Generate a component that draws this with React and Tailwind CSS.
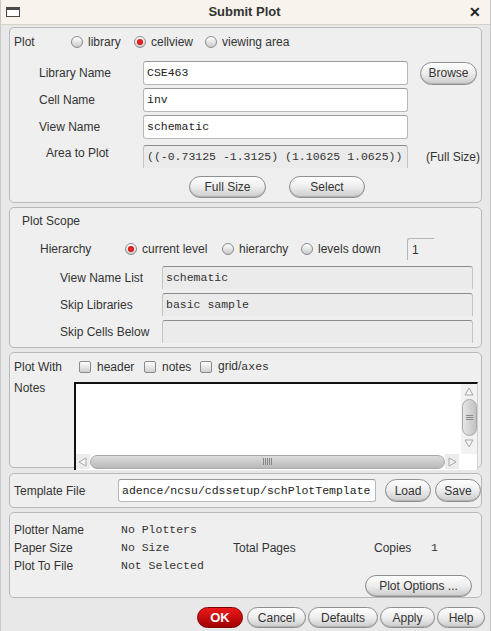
import React from 'react';

const sans = "font-['Liberation_Sans',Arial,sans-serif]";
const mono = "font-['Liberation_Mono','Courier_New',monospace]";

const Btn = ({children, className = ''}) => (
    <div className={`flex items-center justify-center rounded-full border border-[#8f8f8f] bg-linear-to-b from-[#fefefe] via-[#ededed] to-[#cbcbcb] text-[12px] text-[#333] shadow-[inset_0_-1px_0_#b3b3b3] ${className}`}>
        {children}
    </div>
);

const Radio = ({on}) => (
    <span className="flex h-[12px] w-[12px] shrink-0 items-center justify-center rounded-full border border-[#8a8a8a] bg-linear-to-b from-white to-[#cacaca]">
        {on && <span className="h-[6px] w-[6px] rounded-full bg-[radial-gradient(circle,#ff3030,#b00000)]" />}
    </span>
);

const Check = () => (
    <span className="h-[12px] w-[12px] shrink-0 rounded-[2px] border border-[#8a8a8a] bg-linear-to-b from-white to-[#cfcfcf]" />
);

const Field = ({children, className = ''}) => (
    <div className={`flex items-center rounded-[3px] border border-[#b8b8b8] border-t-[#9a9a9a] bg-white pl-[3px] text-[11.5px] text-[#222] ${mono} ${className}`}>
        {children}
    </div>
);

const Inactive = ({children, className = ''}) => (
    <div className={`flex items-center rounded-t-[3px] border-x border-t border-[#c4c4c4] border-t-[#8c8c8c] bg-[#ebebeb] pl-[3px] text-[11.5px] text-[#333] ${mono} ${className}`}>
        {children}
    </div>
);

const Panel = ({children, className = ''}) => (
    <div className={`mx-[8px] rounded-[5px] border border-[#b9b9b9] bg-[#efefef] ${className}`}>{children}</div>
);

const Arrow = ({dir}) => {
    const pts = {
        up: '3,10 7,3 11,10',
        down: '3,4 7,11 11,4',
        left: '10,3 3,7 10,11',
        right: '4,3 11,7 4,11',
    }[dir];
    return (
        <svg width="14" height="14" viewBox="0 0 14 14">
            <polygon points={pts} fill="#f4f4f4" stroke="#a8a8a8" strokeWidth="1" />
        </svg>
    );
};

const App = () => (
    <div className={`flex h-[631px] w-[491px] flex-col overflow-hidden border-x border-[#c9c9c9] bg-[#e8e8e8] ${sans} text-[12px] text-[#333]`}>
        <div className="flex h-[25px] shrink-0 items-center border-b border-[#d6d1c9] bg-[#f8f4ed] px-[5px]">
            <span className="h-[10px] w-[14px] border border-t-[3px] border-[#4a4a4a] bg-white" />
            <span className="flex-1 text-center text-[13px] font-bold text-[#333]">Submit Plot</span>
            <span className="mr-[4px] text-[14px] font-bold text-[#222]">✕</span>
        </div>

        <Panel className="mt-[2px] h-[176px] shrink-0">
            <div className="flex h-[28px] items-center">
                <span className="ml-[4px] w-[57px]">Plot</span>
                <div className="flex w-[63px] items-center gap-[5px]"><Radio />library</div>
                <div className="flex w-[71px] items-center gap-[5px]"><Radio on />cellview</div>
                <div className="flex items-center gap-[5px]"><Radio />viewing area</div>
            </div>
            <div className="mt-[5px] flex h-[24px] items-center">
                <span className="ml-[29px] w-[104px]">Library Name</span>
                <Field className="h-[24px] w-[265px]">CSE463</Field>
                <Btn className="ml-[12px] h-[23px] w-[57px]">Browse</Btn>
            </div>
            <div className="mt-[3px] flex h-[24px] items-center">
                <span className="ml-[29px] w-[104px]">Cell Name</span>
                <Field className="h-[24px] w-[265px]">inv</Field>
            </div>
            <div className="mt-[3px] flex h-[24px] items-center">
                <span className="ml-[29px] w-[104px]">View Name</span>
                <Field className="h-[24px] w-[265px]">schematic</Field>
            </div>
            <div className="mt-[6px] flex h-[23px] items-start">
                <span className="ml-[36px] w-[97px] leading-[16px]">Area to Plot</span>
                <Inactive className="h-[23px] w-[265px]">((-0.73125 -1.3125) (1.10625 1.0625))</Inactive>
                <span className="ml-[18px] self-center">(Full Size)</span>
            </div>
            <div className="mt-[8px] flex h-[22px]">
                <Btn className="ml-[179px] h-[22px] w-[77px]">Full Size</Btn>
                <Btn className="ml-[23px] h-[22px] w-[76px]">Select</Btn>
            </div>
        </Panel>

        <Panel className="mt-[4px] h-[141px] shrink-0">
            <div className="flex h-[26px] items-center pl-[12px]">Plot Scope</div>
            <div className="mt-[3px] flex h-[24px] items-center">
                <span className="ml-[30px] w-[85px]">Hierarchy</span>
                <div className="flex w-[97px] items-center gap-[5px]"><Radio on />current level</div>
                <div className="flex w-[79px] items-center gap-[5px]"><Radio />hierarchy</div>
                <div className="flex w-[106px] items-center gap-[5px]"><Radio />levels down</div>
                <div className="flex h-[22px] w-[27px] items-center rounded-tl-[3px] border-l border-t border-[#b5b5b5] pl-[4px]">1</div>
            </div>
            <div className="mt-[5px] flex h-[23px] items-center">
                <span className="ml-[50px] w-[102px]">View Name List</span>
                <Inactive className="h-[23px] w-[311px]">schematic</Inactive>
            </div>
            <div className="mt-[4px] flex h-[23px] items-center">
                <span className="ml-[50px] w-[102px]">Skip Libraries</span>
                <Inactive className="h-[23px] w-[311px]">basic sample</Inactive>
            </div>
            <div className="mt-[4px] flex h-[23px] items-center">
                <span className="ml-[50px] w-[102px]">Skip Cells Below</span>
                <Inactive className="h-[23px] w-[311px]" />
            </div>
        </Panel>

        <Panel className="mt-[4px] h-[116px] shrink-0">
            <div className="flex h-[27px] items-center">
                <span className="ml-[4px] w-[65px]">Plot With</span>
                <div className="flex w-[65px] items-center gap-[6px]"><Check />header</div>
                <div className="flex w-[56px] items-center gap-[6px]"><Check />notes</div>
                <div className="flex items-center gap-[6px]"><Check /><span>grid/<span className={`text-[11.5px] ${mono}`}>axes</span></span></div>
            </div>
            <div className="mt-[2px] flex items-start">
                <span className="ml-[4px] w-[60px] leading-[12px]">Notes</span>
                <div className="flex h-[88px] w-[404px] flex-col border-l-2 border-r border-t-2 border-[#111] border-r-[#d0d0d0] bg-white">
                    <div className="flex h-[70px]">
                        <div className="flex-1" />
                        <div className="flex w-[16px] flex-col items-center bg-[#f2f2f2] pt-[1px]">
                            <Arrow dir="up" />
                            <div className="flex h-[37px] w-[15px] items-center justify-center rounded-full border border-[#a9a9a9] bg-linear-to-r from-[#e6e6e6] to-[#c2c2c2]">
                                <svg width="7" height="6" viewBox="0 0 7 6"><path d="M0 0.5h7M0 2.5h7M0 4.5h7" stroke="#888" /></svg>
                            </div>
                            <Arrow dir="down" />
                        </div>
                    </div>
                    <div className="flex h-[15px] items-center">
                        <div className="flex h-[15px] w-[14px] items-center justify-center bg-[#ececec]"><Arrow dir="left" /></div>
                        <div className="flex h-[14px] flex-1 items-center justify-center rounded-full border border-[#a9a9a9] bg-linear-to-b from-[#dcdcdc] to-[#b9b9b9]">
                            <svg width="9" height="7" viewBox="0 0 9 7"><path d="M0.5 0v7M2.5 0v7M4.5 0v7M6.5 0v7M8.5 0v7" stroke="#888" /></svg>
                        </div>
                        <div className="flex h-[15px] w-[14px] items-center justify-center bg-[#ececec]"><Arrow dir="right" /></div>
                        <div className="w-[18px]" />
                    </div>
                </div>
            </div>
        </Panel>

        <Panel className="mt-[5px] flex h-[35px] shrink-0 items-center">
            <span className="ml-[4px] w-[104px]">Template File</span>
            <Field className="h-[23px] w-[258px]">adence/ncsu/cdssetup/schPlotTemplate</Field>
            <Btn className="ml-[9px] h-[23px] w-[46px]">Load</Btn>
            <Btn className="ml-[4px] h-[23px] w-[46px]">Save</Btn>
        </Panel>

        <Panel className="mt-[4px] flex h-[86px] shrink-0 flex-col pt-[8px]">
            <div className="flex h-[18px] items-center">
                <span className="ml-[4px] w-[107px]">Plotter Name</span>
                <span className={`text-[11.5px] ${mono}`}>No Plotters</span>
            </div>
            <div className="flex h-[18px] items-center">
                <span className="ml-[4px] w-[107px]">Paper Size</span>
                <span className={`w-[112px] text-[11.5px] ${mono}`}>No Size</span>
                <span className="w-[141px]">Total Pages</span>
                <span className="w-[57px]">Copies</span>
                <span className={`text-[11.5px] ${mono}`}>1</span>
            </div>
            <div className="flex h-[18px] items-center">
                <span className="ml-[4px] w-[107px]">Plot To File</span>
                <span className={`text-[11.5px] ${mono}`}>Not Selected</span>
            </div>
            <Btn className="mr-[9px] h-[22px] w-[107px] self-end">Plot Options ...</Btn>
        </Panel>

        <div className="mt-[9px] flex h-[21px] shrink-0 justify-end pr-[5px]">
            <div className="flex h-[21px] w-[46px] items-center justify-center rounded-full border border-[#7a0000] bg-linear-to-b from-[#ec1a1a] to-[#a30000] text-[13px] font-bold text-white">OK</div>
            <Btn className="ml-[4px] h-[21px] w-[59px]">Cancel</Btn>
            <Btn className="ml-[2px] h-[21px] w-[70px]">Defaults</Btn>
            <Btn className="ml-[2px] h-[21px] w-[55px]">Apply</Btn>
            <Btn className="ml-[2px] h-[21px] w-[48px]">Help</Btn>
        </div>
    </div>
);

export default App;
